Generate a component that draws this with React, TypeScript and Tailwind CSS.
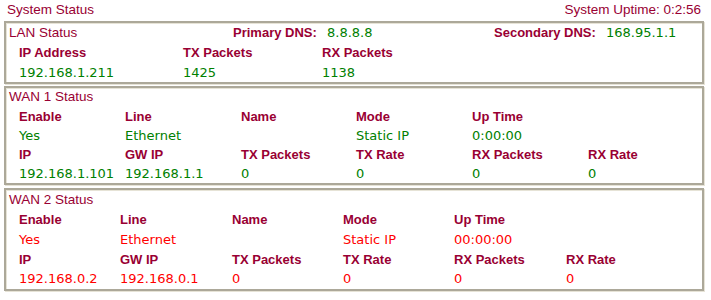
import React from 'react';

type Cell = { label: string; value: string };

const LABEL = 'text-[#990033] font-bold text-[13px] font-["Liberation_Sans",Arial,sans-serif]';
const TITLE = 'text-[#990033] text-[13.5px] font-["Liberation_Sans",Arial,sans-serif]';
const VALUE = 'text-[13px] font-["DejaVu_Sans",Verdana,sans-serif]';

const Box = ({ className = '', children }: { className?: string; children: React.ReactNode }) => (
  <div
    className={`border-2 border-[#aca899] shadow-[inset_1px_1px_0_#e6e3d6,1px_1px_0_#e6e3d6] bg-white pl-[3px] ${className}`}>
    {children}
  </div>
);

const WanRows = ({
  first,
  second,
  cols,
  rowH,
  color,
}: {
  first: Cell[];
  second: Cell[];
  cols: string;
  rowH: string;
  color: string;
}) => (
  <div className={`grid ${cols} pl-[10px]`}>
    {first.map((c, i) => (
      <div key={`l1-${i}`} className={`${rowH} flex items-center ${LABEL}`}>
        {c.label}
      </div>
    ))}
    {first.map((c, i) => (
      <div key={`v1-${i}`} className={`${rowH} flex items-center ${VALUE} ${color}`}>
        {c.value}
      </div>
    ))}
    {second.map((c, i) => (
      <div key={`l2-${i}`} className={`${rowH} flex items-center ${LABEL}`}>
        {c.label}
      </div>
    ))}
    {second.map((c, i) => (
      <div key={`v2-${i}`} className={`${rowH} flex items-center ${VALUE} ${color}`}>
        {c.value}
      </div>
    ))}
  </div>
);

const App = () => {
  const wan1a: Cell[] = [
    { label: 'Enable', value: 'Yes' },
    { label: 'Line', value: 'Ethernet' },
    { label: 'Name', value: '' },
    { label: 'Mode', value: 'Static IP' },
    { label: 'Up Time', value: '0:00:00' },
    { label: '', value: '' },
  ];
  const wan1b: Cell[] = [
    { label: 'IP', value: '192.168.1.101' },
    { label: 'GW IP', value: '192.168.1.1' },
    { label: 'TX Packets', value: '0' },
    { label: 'TX Rate', value: '0' },
    { label: 'RX Packets', value: '0' },
    { label: 'RX Rate', value: '0' },
  ];
  const wan2a: Cell[] = [
    { label: 'Enable', value: 'Yes' },
    { label: 'Line', value: 'Ethernet' },
    { label: 'Name', value: '' },
    { label: 'Mode', value: 'Static IP' },
    { label: 'Up Time', value: '00:00:00' },
    { label: '', value: '' },
  ];
  const wan2b: Cell[] = [
    { label: 'IP', value: '192.168.0.2' },
    { label: 'GW IP', value: '192.168.0.1' },
    { label: 'TX Packets', value: '0' },
    { label: 'TX Rate', value: '0' },
    { label: 'RX Packets', value: '0' },
    { label: 'RX Rate', value: '0' },
  ];

  return (
    <div className="w-[711px] h-[300px] bg-white pl-[4px] pr-[7px] overflow-hidden">
      <div className="h-[21px] flex items-center justify-between px-[3px] pb-[1px]">
        <span className={TITLE}>System Status</span>
        <span className={TITLE}>System Uptime: 0:2:56</span>
      </div>

      <Box>
        <div className="h-[20px] flex items-center">
          <span className={`${TITLE} w-[224px]`}>LAN Status</span>
          <span className={`${LABEL} w-[94px]`}>Primary DNS:</span>
          <span className={`${VALUE} text-[#008000] w-[167px]`}>8.8.8.8</span>
          <span className={`${LABEL} w-[112px]`}>Secondary DNS:</span>
          <span className={`${VALUE} text-[#008000]`}>168.95.1.1</span>
        </div>
        <div className="grid grid-cols-[164px_139px_1fr] pl-[10px]">
          <div className={`h-[20px] flex items-center ${LABEL}`}>IP Address</div>
          <div className={`h-[20px] flex items-center ${LABEL}`}>TX Packets</div>
          <div className={`h-[20px] flex items-center ${LABEL}`}>RX Packets</div>
          <div className={`h-[19px] flex items-center ${VALUE} text-[#008000]`}>192.168.1.211</div>
          <div className={`h-[19px] flex items-center ${VALUE} text-[#008000]`}>1425</div>
          <div className={`h-[19px] flex items-center ${VALUE} text-[#008000]`}>1138</div>
        </div>
      </Box>

      <Box className="mt-[2px]">
        <div className={`h-[19px] flex items-center ${TITLE}`}>WAN 1 Status</div>
        <WanRows
          first={wan1a}
          second={wan1b}
          cols="grid-cols-[106px_116px_115px_116px_116px_1fr]"
          rowH="h-[19px]"
          color="text-[#008000]"
        />
      </Box>

      <Box className="mt-[3px]">
        <div className={`h-[20px] flex items-center ${TITLE}`}>WAN 2 Status</div>
        <WanRows
          first={wan2a}
          second={wan2b}
          cols="grid-cols-[101px_112px_111px_111px_112px_1fr]"
          rowH="h-[19.75px]"
          color="text-[#ff0000]"
        />
      </Box>
    </div>
  );
};

export default App;
